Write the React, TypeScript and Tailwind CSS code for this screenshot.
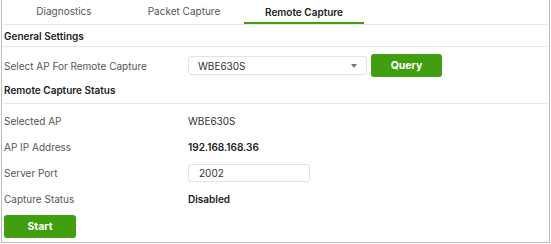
import React from 'react';

const tabs = ['Diagnostics', 'Packet Capture', 'Remote Capture'];

const Row: React.FC<{ label: string; children: React.ReactNode }> = ({ label, children }) => (
  <div className="flex h-[26px] items-center">
    <div className="w-[185px] pl-px text-[#555]">{label}</div>
    <div className="flex-1">{children}</div>
  </div>
);

const App: React.FC = () => {
  return (
    <div className="ml-px h-[243px] w-[549px] border-x border-b border-[#bdbdbd] bg-white px-px font-['Inter',sans-serif] text-[10px] leading-[12px] text-[#333]">
      <div className="flex h-[25px] border-b border-[#e6e6e6]">
        <div className="ml-px flex">
          {tabs.map((t, i) => (
            <div
              key={t}
              className={
                i === 2
                  ? 'flex h-[24px] w-[120px] items-center justify-center border-b-2 border-[#3f9f0f] pt-[2px] font-semibold text-[#222]'
                  : 'flex h-[24px] w-[120px] items-center justify-center pb-[2px] text-[#555]'
              }
            >
              {t}
            </div>
          ))}
        </div>
      </div>

      <div className="flex h-[22px] items-center border-b border-[#e6e6e6] pl-px font-semibold text-[#222]">
        General Settings
      </div>

      <div className="flex items-center pt-[7px]">
        <div className="w-[185px] pl-px text-[#555]">Select AP For Remote Capture</div>
        <div className="relative flex h-[19px] w-[179px] items-center rounded-[3px] border border-[#e3e3e3] pl-[9px] text-[#333]">
          WBE630S
          <span className="absolute right-[9px] top-[7px] h-0 w-0 border-x-[3px] border-t-[4px] border-x-transparent border-t-[#777]" />
        </div>
        <button className="ml-[4px] h-[23px] w-[71px] rounded-[3px] bg-[#3f9f0f] text-[10.5px] font-bold text-white">
          Query
        </button>
      </div>

      <div className="border-b border-[#e6e6e6] pb-[7px] pl-px pt-[7px] font-semibold text-[#222]">
        Remote Capture Status
      </div>

      <div className="pt-[4px]">
        <Row label="Selected AP">WBE630S</Row>
        <Row label="AP IP Address">
          <span className="font-semibold text-[#222]">192.168.168.36</span>
        </Row>
        <Row label="Server Port">
          <div className="flex h-[18px] w-[122px] items-center rounded-[3px] border border-[#e3e3e3] pl-[10px]">2002</div>
        </Row>
        <Row label="Capture Status">
          <span className="font-semibold text-[#222]">Disabled</span>
        </Row>
      </div>

      <button className="ml-px mt-[3px] h-[23px] w-[72px] rounded-[3px] bg-[#3f9f0f] text-[10.5px] font-bold text-white">
        Start
      </button>
    </div>
  );
};

export default App;
